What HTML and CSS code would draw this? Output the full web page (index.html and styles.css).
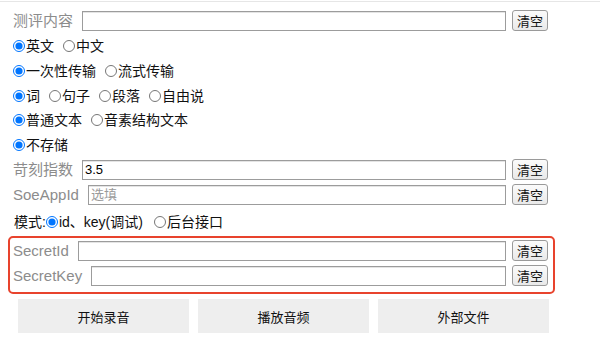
FILE: index.html
```html
<!DOCTYPE html>
<html lang="zh">
<head>
<meta charset="utf-8">
<title>SOE</title>
<link rel="stylesheet" href="styles.css">
</head>
<body>
<div class="topline"></div>
<div class="page">
  <div class="field">
    <span class="label">测评内容</span>
    <input class="text" type="text">
    <button class="clear">清空</button>
  </div>
  <div class="radios">
    <label><input type="radio" name="lang" checked>英文</label>
    <label><input type="radio" name="lang">中文</label>
  </div>
  <div class="radios">
    <label><input type="radio" name="mode1" checked>一次性传输</label>
    <label><input type="radio" name="mode1">流式传输</label>
  </div>
  <div class="radios">
    <label><input type="radio" name="unit" checked>词</label>
    <label><input type="radio" name="unit">句子</label>
    <label><input type="radio" name="unit">段落</label>
    <label><input type="radio" name="unit">自由说</label>
  </div>
  <div class="radios short">
    <label><input type="radio" name="txt" checked>普通文本</label>
    <label><input type="radio" name="txt">音素结构文本</label>
  </div>
  <div class="radios">
    <label><input type="radio" name="store" checked>不存储</label>
  </div>
  <div class="field">
    <span class="label">苛刻指数</span>
    <input class="text" type="text" value="3.5">
    <button class="clear">清空</button>
  </div>
  <div class="field">
    <span class="label">SoeAppId</span>
    <input class="text" type="text" placeholder="选填">
    <button class="clear">清空</button>
  </div>
  <div class="radios mode">
    <span class="modelabel">模式:</span>
    <label class="first"><input type="radio" name="auth" checked>id、key(调试)</label>
    <label><input type="radio" name="auth">后台接口</label>
  </div>
  <div class="secretbox">
    <div class="field">
      <span class="label">SecretId</span>
      <input class="text" type="text">
      <button class="clear">清空</button>
    </div>
    <div class="field">
      <span class="label">SecretKey</span>
      <input class="text" type="text">
      <button class="clear">清空</button>
    </div>
  </div>
  <div class="actions">
    <button class="action">开始录音</button>
    <button class="action">播放音频</button>
    <button class="action">外部文件</button>
  </div>
</div>
</body>
</html>
```
FILE: styles.css
```css
* { box-sizing: border-box; }
html, body { margin: 0; padding: 0; background: #fff; }
body {
  font-family: "Liberation Sans", "Noto Sans CJK SC", sans-serif;
  font-size: 14px;
  color: #111;
}
.topline {
  margin-top: 1px;
  height: 1px;
  background: #e6e6e6;
}
.page {
  width: 555px;
  padding: 6px 0 0 8px;
}
.field {
  display: flex;
  align-items: center;
  height: 25px;
  padding: 0 7px 0 5px;
}
.label {
  font-size: 15px;
  color: #8c8c8c;
  margin-right: 9px;
  white-space: nowrap;
  line-height: 20px;
}
.text {
  flex: 1;
  min-width: 0;
  height: 20px;
  border: 1px solid #9c9c9c;
  box-shadow: inset 0 1px 0 #e4e4e4;
  border-radius: 0;
  padding: 0 2px;
  margin: 0;
  font-family: "Liberation Sans", "Noto Sans CJK SC", sans-serif;
  font-size: 13px;
  color: #000;
  outline: none;
}
.text::placeholder { color: #9a9a9a; }
.clear {
  margin-left: 6px;
  width: 36px;
  height: 21px;
  padding: 0;
  border: 1px solid #9a9a9a;
  border-radius: 3px;
  background: linear-gradient(#fbfbfb, #e9e9e9);
  font-family: "Noto Sans CJK SC", sans-serif;
  font-size: 13px;
  line-height: 19px;
  color: #111;
}
.radios {
  display: flex;
  align-items: center;
  height: 25px;
  line-height: 20px;
  white-space: nowrap;
}
.radios.short { height: 24px; }
.radios label {
  display: inline-flex;
  align-items: center;
  margin-right: 4px;
}
.radios input[type="radio"] {
  width: 12px;
  height: 12px;
  margin: 0 1px 0 5px;
}
.radios.mode {
  height: 29px;
  padding-left: 6px;
  padding-top: 1px;
}
.modelabel { color: #111; }
.radios.mode label.first input { margin-left: 0; }
.radios.mode label.first { margin-right: 6px; }
.secretbox {
  border: 2px solid #e8432d;
  border-radius: 5px;
  padding: 0 5px 4px 3px;
  margin-bottom: 5px;
}
.secretbox .field { padding: 0; }
.actions {
  display: flex;
  gap: 9px;
  padding-left: 10px;
}
.action {
  width: 171px;
  height: 34px;
  border: none;
  background: #eeeeee;
  font-family: "Noto Sans CJK SC", sans-serif;
  font-size: 13px;
  color: #111;
  padding: 0;
}
```
